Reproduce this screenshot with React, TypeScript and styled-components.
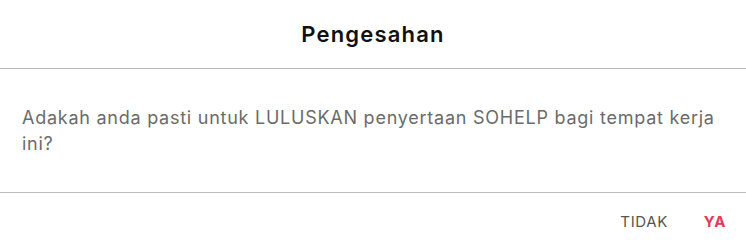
import React from 'react';
import styled, { createGlobalStyle } from 'styled-components';

const GlobalStyle = createGlobalStyle`
  html, body {
    margin: 0;
    padding: 0;
    background: #ffffff;
  }
  body {
    font-family: Inter, "Noto Sans", sans-serif;
  }
`;

const Dialog = styled.div`
  width: 746px;
  height: 250px;
  background: #ffffff;
  display: flex;
  flex-direction: column;
`;

const Header = styled.div`
  height: 69px;
  display: flex;
  align-items: center;
  justify-content: center;
  border-bottom: 1px solid #bdbdbd;
  box-sizing: border-box;
`;

const Title = styled.h2`
  margin: 0;
  font-size: 22px;
  font-weight: 600;
  letter-spacing: 1.2px;
  color: #111111;
`;

const Body = styled.div`
  height: 124px;
  box-sizing: border-box;
  padding: 36px 22px 0 22px;
  border-bottom: 1px solid #bdbdbd;
`;

const Message = styled.p`
  margin: 0;
  font-size: 18px;
  line-height: 26px;
  letter-spacing: 0.75px;
  color: #6b6b6b;
`;

const Footer = styled.div`
  flex: 1;
  display: flex;
  justify-content: flex-end;
  align-items: center;
  gap: 36px;
  padding: 0 20px 0 0;
`;

const ActionButton = styled.button<{ $primary?: boolean }>`
  border: none;
  background: none;
  padding: 0;
  font-family: inherit;
  font-size: 15px;
  letter-spacing: 0.6px;
  font-weight: ${(p) => (p.$primary ? 700 : 400)};
  color: ${(p) => (p.$primary ? '#e8385a' : '#555555')};
  cursor: pointer;
`;

export default function App() {
  return (
    <>
      <GlobalStyle />
      <Dialog>
        <Header>
          <Title>Pengesahan</Title>
        </Header>
        <Body>
          <Message>
            Adakah anda pasti untuk LULUSKAN penyertaan SOHELP bagi tempat kerja ini?
          </Message>
        </Body>
        <Footer>
          <ActionButton>TIDAK</ActionButton>
          <ActionButton $primary>YA</ActionButton>
        </Footer>
      </Dialog>
    </>
  );
}
